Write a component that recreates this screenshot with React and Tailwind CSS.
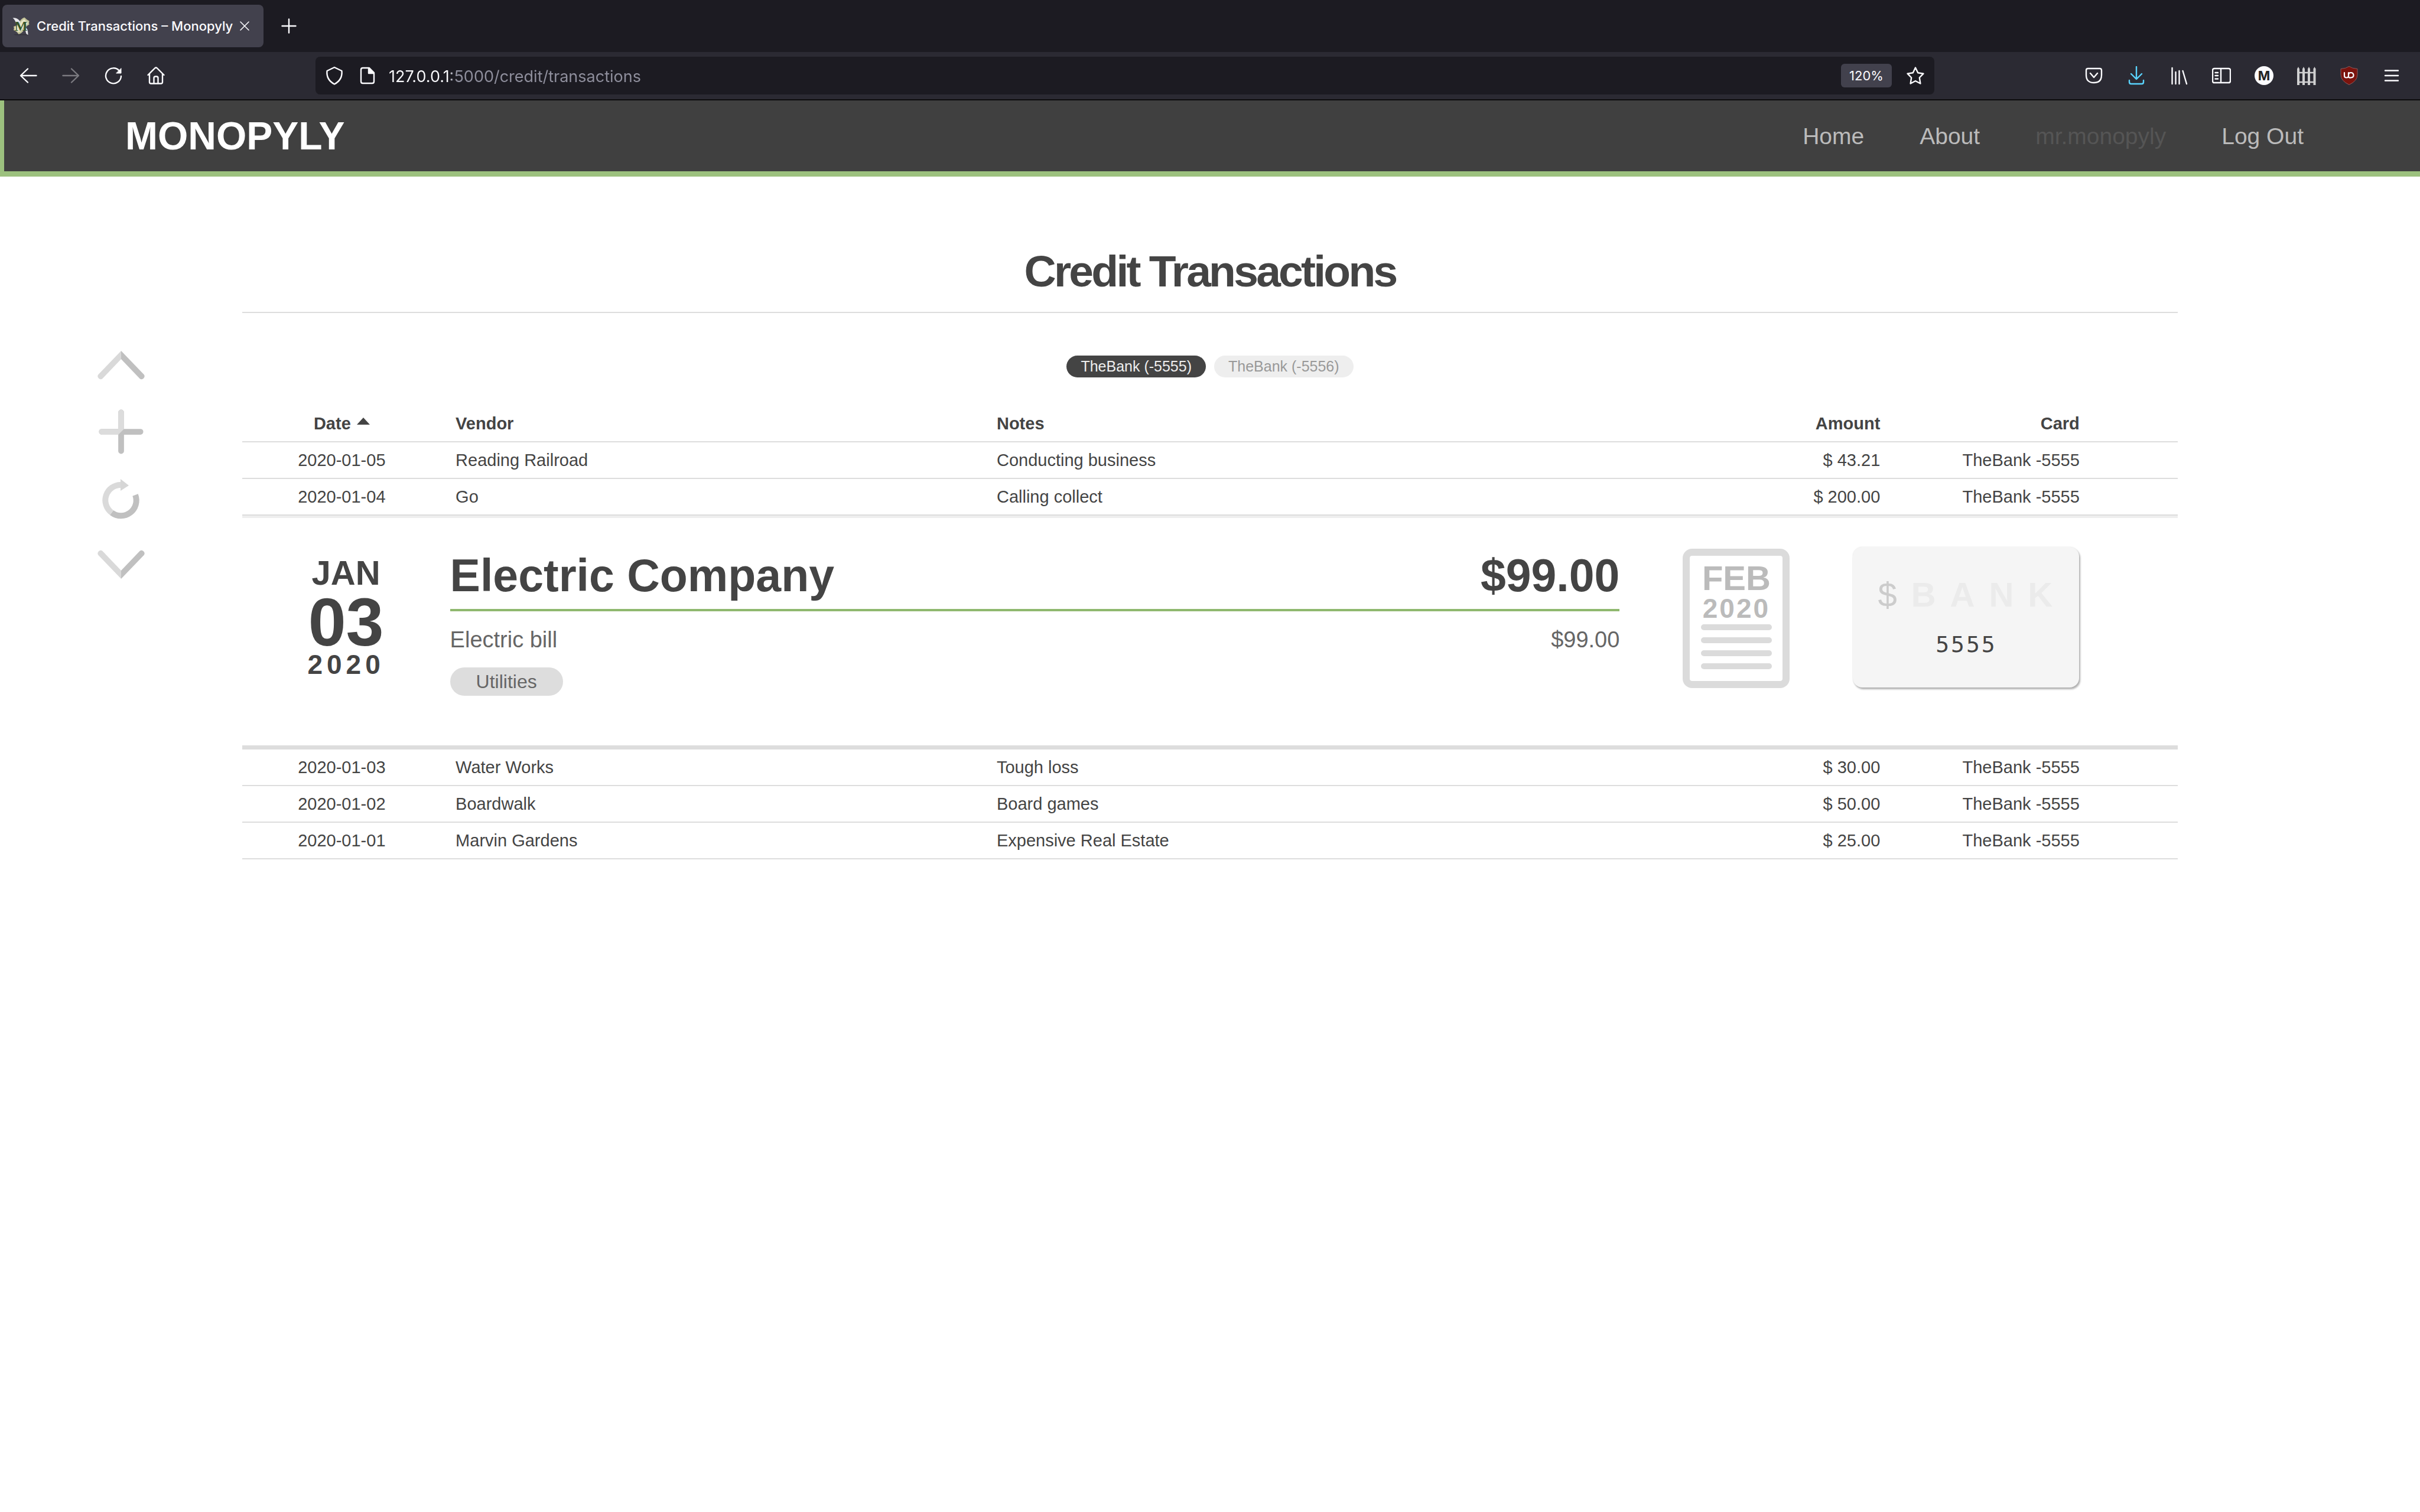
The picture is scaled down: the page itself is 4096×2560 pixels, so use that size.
import React from "react";

const before = [
  ["2020-01-05", "Reading Railroad", "Conducting business", "43.21"],
  ["2020-01-04", "Go", "Calling collect", "200.00"],
];
const after = [
  ["2020-01-03", "Water Works", "Tough loss", "30.00"],
  ["2020-01-02", "Boardwalk", "Board games", "50.00"],
  ["2020-01-01", "Marvin Gardens", "Expensive Real Estate", "25.00"],
];

function Icon({ children, className = "size-8", box = "0 0 32 32" }) {
  return (
    <svg
      viewBox={box}
      className={className}
      fill="none"
      stroke="currentColor"
      strokeWidth="2.4"
      strokeLinecap="round"
      strokeLinejoin="round"
      aria-hidden="true"
    >
      {children}
    </svg>
  );
}

function ToolButton({ label, className = "text-[#fbfbfe]", children }) {
  return (
    <button type="button" aria-label={label} className={`flex h-16 w-[72px] items-center justify-center ${className}`}>
      {children}
    </button>
  );
}

function Favicon() {
  return (
    <svg viewBox="0 0 32 32" className="size-8" aria-hidden="true">
      <path d="M3 30h24v1.500H6z" fill="#33323b" />
      <path d="M21.500 1.500q3.500 4 8 6-1 4 0 6-6 3-9 9t-9 7.500q-3-5-8.500-7 1.500-3 0-6 7-2 10-8t8.500-7.500z" fill="#c4c49a" />
      <path d="M21 4.500q2 3 6 4.500-1 3 0 4-6 3-9 8t-7 5.500q-2-3-6-4.500 1-2 0-4 6-2 9-7t7-6.500z" fill="#e6e5c6" />
      <path d="M1.500 2.500q8-1.500 13 6.500l-3 3.500-5-2Q6 6 1.500 2.500z" fill="#e9e9ec" />
      <path d="M21.500 17q6 2 6 14-4-1-4-6-3-3-2-8z" fill="#e9e9ec" />
      <text x="15.700" y="23.500" textAnchor="middle" fontSize="23" fontWeight="700" fill="#35552a" fontFamily="Liberation Serif, serif">M</text>
    </svg>
  );
}

function BrowserChrome() {
  return (
    <div className="border-b-2 border-[#0c0c0d] bg-[#2b2a33] font-['Inter',sans-serif] text-[#fbfbfe]">
      <div className="flex h-[88px] items-center bg-[#1c1b22] pl-1">
        <div className="flex h-[72px] w-[442px] items-center rounded-lg bg-[#42414d] pl-4">
          <Favicon />
          <span className="ml-[10px] text-[22px] font-medium whitespace-nowrap">Credit Transactions – Monopyly</span>
          <button type="button" aria-label="Close tab" className="mr-6 ml-auto">
            <Icon className="size-4" box="0 0 16 16">
              <path d="M1 1l14 14M15 1L1 15" strokeWidth="1.6" />
            </Icon>
          </button>
        </div>
        <button type="button" aria-label="New tab" className="ml-[27px]">
          <Icon>
            <path d="M16 4.500v23M4.500 16h23" />
          </Icon>
        </button>
      </div>
      <div className="flex h-20 items-center px-3">
        <ToolButton label="Back">
          <Icon>
            <path d="M29.500 16H3.500M15 4.500L3 16l12 11.500" />
          </Icon>
        </ToolButton>
        <ToolButton label="Forward" className="text-[#7b7a80]">
          <Icon>
            <path d="M2.500 16h26M17 4.500L29 16 17 27.500" />
          </Icon>
        </ToolButton>
        <ToolButton label="Reload">
          <Icon>
            <path d="M26 8a13 13 0 1 0 3 9" />
            <path d="M29 4v8h-8z" fill="currentColor" strokeWidth="1" />
          </Icon>
        </ToolButton>
        <ToolButton label="Home">
          <Icon>
            <path d="M2.500 15L14 3.500q2-2 4 0L29.500 15M5 13v14q0 2.500 2.500 2.500h17q2.500 0 2.500-2.500V13M12.500 29V20q0-2.500 2.500-2.500h2q2.500 0 2.500 2.500v9" />
          </Icon>
        </ToolButton>

        <div className="mx-[234px] flex h-16 flex-1 items-center rounded-lg bg-[#1c1b22] px-4">
          <Icon>
            <path d="M16 2l12.500 6q1.500 15-12.500 22.500Q2 23 3.500 8z" />
          </Icon>
          <Icon className="ml-6 size-8">
            <path d="M19 3H8q-3 0-3 3v20q0 3 3 3h16q3 0 3-3V11z" />
            <path d="M18 3.500V12h8.500z" fill="currentColor" />
          </Icon>
          <input
            type="text"
            aria-label="Address"
            defaultValue="127.0.0.1:5000/credit/transactions"
            className="ml-5 h-12 min-w-0 flex-1 bg-[linear-gradient(to_right,#fbfbfe_106px,#8f8f9d_106px)] bg-clip-text pt-[2px] text-[27px] text-transparent outline-none"
          />
          <button type="button" className="h-10 w-[86px] rounded-md bg-[#42414d] text-[22px]">
            120%
          </button>
          <button type="button" aria-label="Bookmark" className="ml-6">
            <Icon>
              <path d="M16 2.500l4.200 8.800 9.300 1.400-6.700 6.800 1.600 10L16 25l-8.400 4.500 1.600-10-6.700-6.800 9.300-1.400z" />
            </Icon>
          </button>
        </div>

        <ToolButton label="Save to Pocket">
          <Icon>
            <path d="M6 4h20q3 0 3 3v8q0 13-13 13T3 15V7q0-3 3-3zM10 12l6 7 6-7" />
          </Icon>
        </ToolButton>
        <ToolButton label="Downloads" className="text-[#5ad4ff]">
          <Icon>
            <path d="M16 1v19M7 13l9 9 9-9M4 24v3q0 3 3 3h18q3 0 3-3v-3" />
          </Icon>
        </ToolButton>
        <ToolButton label="Library">
          <Icon>
            <path d="M4.500 3v27M10.500 10v20M16.500 8v22M22.500 8L29 30" />
          </Icon>
        </ToolButton>
        <ToolButton label="Sidebars">
          <Icon>
            <path d="M4 4h24q3 0 3 3v18q0 3-3 3H4q-3 0-3-3V7q0-3 3-3zM15 4v24M5.500 11H10M5.500 16H10M5.500 21.500H10" />
          </Icon>
        </ToolButton>
        <ToolButton label="Account">
          <span className="flex size-8 items-center justify-center rounded-full bg-[#fbfbfe] text-[22px] font-bold text-[#222]">M</span>
        </ToolButton>
        <ToolButton label="Fence" className="text-[#cfcfd0]">
          <Icon>
            <path d="M2 4v28M11 4v28M20 4v28M29.500 4v28" strokeWidth="4" strokeLinecap="butt" />
            <path d="M1 11h30M1 27h30" strokeWidth="2.500" strokeLinecap="butt" />
            <path d="M0 5l2-4 2 4zM9 5l2-4 2 4zM18 5l2-4 2 4zM27.500 5l2-4 2 4z" fill="currentColor" stroke="none" />
          </Icon>
        </ToolButton>
        <ToolButton label="Content blocker">
          <Icon>
            <path d="M16 .5Q21 4 30 4.500v10Q30 25 16 31.500 2 25 2 14.500v-10Q11 4 16 .5z" fill="#7b130d" stroke="#8a5a5c" strokeWidth="1" />
            <path d="M8 11v5.500q0 3 3.500 3T15 16.500V11M15 15q0-4 4-4t4.500 4-4.500 4.500T15 16" strokeWidth="2.200" />
          </Icon>
        </ToolButton>
        <ToolButton label="Menu">
          <Icon>
            <path d="M5 7.500h22M5 16h22M5 24.500h22" />
          </Icon>
        </ToolButton>
      </div>
    </div>
  );
}

function SiteHeader() {
  return (
    <header className="flex h-[129px] items-center border-b-[9px] border-l-[7px] border-[#9cc17e] bg-[#404040] pr-[197px] pl-[205px]">
      <a href="#home" className="text-[66px] font-bold text-white">MONOPYLY</a>
      <nav className="ml-auto flex gap-[94px] pt-[2px] text-[39px] text-[#bbb]">
        <a href="#home">Home</a>
        <a href="#about">About</a>
        <a href="#profile" className="text-[#555]">mr.monopyly</a>
        <a href="#logout">Log Out</a>
      </nav>
    </header>
  );
}

function SideActions() {
  return (
    <aside className="flex flex-col items-center pt-[277px]">
      <button type="button" aria-label="Scroll up">
        <svg viewBox="0 0 80 84" className="h-[84px] w-20" fill="none">
          <path d="M40 18v14L8.500 65A5 5 0 0 1 1.500 58z" fill="#d9d9d9" />
          <path d="M40 18v14L71.500 65A5 5 0 0 0 78.500 58z" fill="#c0c0c0" />
        </svg>
      </button>
      <button type="button" aria-label="Add transaction" className="mt-8">
        <svg viewBox="0 0 80 80" className="size-[78px]">
          <rect x="35" y="1.500" width="10" height="77" rx="5" fill="#c0c0c0" />
          <rect x="1.500" y="35" width="77" height="10" rx="5" fill="#c0c0c0" />
          <path d="M35 6.500a5 5 0 0 1 10 0V35L35 45H6.500a5 5 0 0 1 0-10H35z" fill="#dcdcdc" />
        </svg>
      </button>
      <button type="button" aria-label="Refresh" className="mt-9">
        <svg viewBox="0 0 80 80" className="size-20" fill="none" strokeWidth="10">
          <path d="M64 32A26 26 0 0 1 24 62" stroke="#c0c0c0" />
          <path d="M24 62A26 26 0 0 1 40 15" stroke="#dadada" />
          <path d="M39 5l14 11-14 9z" fill="#d6d6d6" />
        </svg>
      </button>
      <button type="button" aria-label="Scroll down" className="mt-7">
        <svg viewBox="0 0 80 84" className="h-[84px] w-20">
          <path d="M40 66V52L8.500 19A5 5 0 0 0 1.500 26z" fill="#d9d9d9" />
          <path d="M40 66V52L71.500 19A5 5 0 0 1 78.500 26z" fill="#c0c0c0" />
        </svg>
      </button>
    </aside>
  );
}

function Row({ row }) {
  const [date, vendor, notes, amount] = row;
  const cell = "h-[62px] border-b-2 border-[#ddd] px-6";
  return (
    <tr>
      <td className={`${cell} text-center`}>{date}</td>
      <td className={cell}>{vendor}</td>
      <td className={cell}>{notes}</td>
      <td className={`${cell} text-right`}>$ {amount}</td>
      <td className={`${cell} text-right`}>TheBank -5555</td>
      <td className={cell}></td>
    </tr>
  );
}

function Detail() {
  return (
    <div className="flex items-start pt-[49px] pr-[167px] pb-[84px]">
      <div className="mt-[15px] flex w-[352px] flex-col items-center font-bold">
        <span className="text-[58px] leading-[58px]">JAN</span>
        <span className="text-[115px] leading-[108px]">03</span>
        <span className="text-[46px] leading-[36px] tracking-[7px]">2020</span>
      </div>
      <div className="flex-1 text-[#666]">
        <div className="flex justify-between border-b-4 border-[#8fb86f] pb-[9px] text-[77px] leading-[96px] font-bold text-[#444]">
          <h2>Electric Company</h2>
          <span>$99.00</span>
        </div>
        <div className="mt-6 flex justify-between text-[38px] leading-[48px]">
          <span>Electric bill</span>
          <span>$99.00</span>
        </div>
        <span className="mt-[23px] block w-fit rounded-full bg-[#ddd] px-11 text-[32px] leading-[48px]">Utilities</span>
      </div>
      <a
        href="#statement"
        aria-label="Statement, February 2020"
        className="mt-[3px] ml-[107px] flex h-[236px] w-[181px] flex-col items-center rounded-2xl border-[12px] border-[#dbdbdb] pt-[10px] font-bold text-[#bbb]"
      >
        <span className="text-[58px] leading-[56px]">FEB</span>
        <span className="text-[46px] leading-[46px] tracking-[3px]">2020</span>
        <span className="mt-1 flex w-[120px] flex-col gap-3">
          <i className="h-[10px] rounded-full bg-[#dbdbdb]" />
          <i className="h-[10px] rounded-full bg-[#dbdbdb]" />
          <i className="h-[10px] rounded-full bg-[#dbdbdb]" />
          <i className="h-[10px] rounded-full bg-[#dbdbdb]" />
        </span>
      </a>
      <a
        href="#card"
        className="ml-[107px] flex h-[238px] w-[383px] flex-col rounded-2xl bg-[#f5f5f5] pt-[52px] shadow-[2px_3px_3px_rgba(0,0,0,0.3),0_0_2px_rgba(0,0,0,0.12)]"
      >
        <span className="pl-[42px] text-[58px] leading-[58px] font-bold tracking-[24px] text-[#ebebeb]">
          <span className="font-normal text-[#ccc]">$</span>BANK
        </span>
        <span className="mt-[31px] text-center font-['DejaVu_Sans_Mono',monospace] text-[38px] leading-[48px] tracking-[3px]">5555</span>
      </a>
    </div>
  );
}

export default function App() {
  const head = "h-[62px] border-b-2 border-[#ddd] px-6";
  return (
    <div className="min-h-screen bg-white font-['Liberation_Sans',Arial,sans-serif] text-[#444]">
      <BrowserChrome />
      <SiteHeader />
      <div className="grid grid-cols-[1fr_8fr_1fr]">
        <SideActions />
        <main className="pt-[110px]">
          <h1 className="border-b-2 border-[#ddd] pb-[19px] text-center text-[75px] leading-[100px] font-bold tracking-tighter">
            Credit Transactions
          </h1>
          <div className="mt-[72px] flex justify-center gap-[14px] text-[25px] leading-[37px]">
            <button type="button" className="rounded-full bg-[#444] px-6 text-[#eee]">TheBank (-5555)</button>
            <button type="button" className="rounded-full bg-[#eee] px-6 text-[#999]">TheBank (-5556)</button>
          </div>
          <table className="mt-12 w-full table-fixed border-separate border-spacing-0 text-[29px] leading-[36px] whitespace-nowrap">
            <colgroup>
              <col className="w-[10.3%]" />
              <col className="w-[27.95%]" />
              <col className="w-[36.8%]" />
              <col className="w-[10.3%]" />
              <col className="w-[10.3%]" />
              <col />
            </colgroup>
            <thead>
              <tr>
                <th scope="col" aria-sort="descending" className={`${head} text-center`}>
                  <button type="button" className="inline-flex items-center gap-[10px]">
                    Date
                    <svg viewBox="0 0 22 12" className="mb-2 h-3 w-[22px]" fill="currentColor" aria-hidden="true">
                      <path d="M0 12L11 0l11 12z" />
                    </svg>
                  </button>
                </th>
                <th scope="col" className={`${head} text-left`}>Vendor</th>
                <th scope="col" className={`${head} text-left`}>Notes</th>
                <th scope="col" className={`${head} text-right`}>Amount</th>
                <th scope="col" className={`${head} text-right`}>Card</th>
                <td className={head}></td>
              </tr>
            </thead>
            <tbody>
              {before.map((row) => (
                <Row key={row[0]} row={row} />
              ))}
              <tr>
                <td colSpan={6} className="border-t-4 border-b-[7px] border-t-[#eee] border-b-[#ddd] p-0">
                  <Detail />
                </td>
              </tr>
              {after.map((row) => (
                <Row key={row[0]} row={row} />
              ))}
            </tbody>
          </table>
        </main>
      </div>
    </div>
  );
}
